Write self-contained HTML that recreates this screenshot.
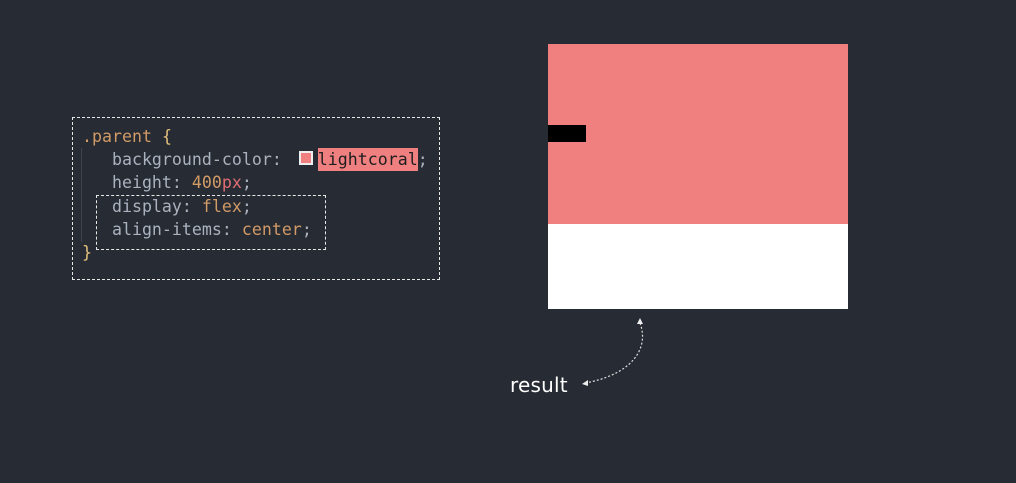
<!DOCTYPE html>
<html><head><style>
body{margin:0;width:1016px;height:483px;background:#272b33;position:relative;overflow:hidden}
.box{position:absolute;left:72px;top:117px;width:368px;height:163px;border:1px dashed #e8e8e8;box-sizing:border-box}
.code{position:absolute;left:82px;top:125px;font:16.6px/23.2px "DejaVu Sans Mono","Liberation Mono",monospace;color:#abb2bf;white-space:pre}
.o{color:#d19a66}.y{color:#e5c07b}.r{color:#e06c75}
.lc{background:#f08080;color:#1e1e1e;padding:2px 0}
.sw{display:inline-block;width:10px;height:10px;background:#f08080;border:2px solid #eee;vertical-align:0px;margin-left:7px;margin-right:5px}
.inner{position:absolute;left:96px;top:195px;width:230px;height:55px;border:1px dashed #e8e8e8;box-sizing:border-box}
.guide{position:absolute;left:81px;top:148px;width:1px;height:94px;background:#3e434d}
</style></head><body>
<div class="box"></div>
<div class="guide"></div>
<div class="inner"></div>
<div class="code"><span class="o">.parent</span> <span class="y">{</span>
   background-color: <span class="sw"></span><span class="lc">lightcoral</span>;
   height: <span class="o">400</span><span class="r">px</span>;
   display: <span class="o">flex</span>;
   align-items: <span class="o">center</span>;
<span class="y">}</span></div>
<div style="position:absolute;left:548px;top:44px;width:300px;height:180px;background:#f08080"></div>
<div style="position:absolute;left:548px;top:224px;width:300px;height:85px;background:#fff"></div>
<div style="position:absolute;left:548px;top:125px;width:38px;height:17px;background:#000"></div>
<svg style="position:absolute;left:0;top:0" width="1016" height="483">
<path d="M640 323 C650 350 630 375 585 383" fill="none" stroke="#ddd" stroke-width="1.2" stroke-dasharray="2 2"/>
<path d="M640 318 l-3 6 h6 z" fill="#eee"/>
<path d="M582 384 l6 -4 l0 6 z" fill="#eee"/>
</svg>
<div style="position:absolute;left:510px;top:373px;font:20px 'DejaVu Sans',sans-serif;color:#fff;letter-spacing:0.2px">result</div>
</body></html>
